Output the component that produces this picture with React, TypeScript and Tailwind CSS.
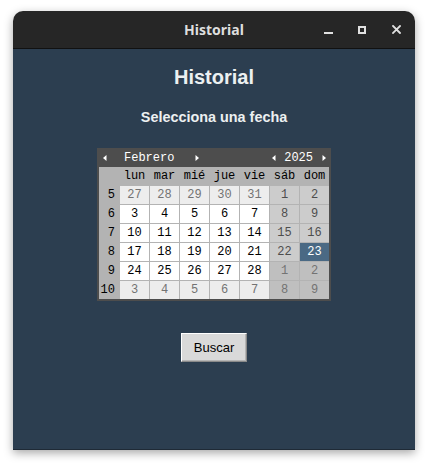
import React from "react";

type Kind = "normal" | "other" | "weekend" | "otherWeekend" | "selected";

const WEEKDAYS = ["lun", "mar", "mié", "jue", "vie", "sáb", "dom"];

const ROWS: { week: number; days: [number, Kind][] }[] = [
  { week: 5, days: [[27, "other"], [28, "other"], [29, "other"], [30, "other"], [31, "other"], [1, "weekend"], [2, "weekend"]] },
  { week: 6, days: [[3, "normal"], [4, "normal"], [5, "normal"], [6, "normal"], [7, "normal"], [8, "weekend"], [9, "weekend"]] },
  { week: 7, days: [[10, "normal"], [11, "normal"], [12, "normal"], [13, "normal"], [14, "normal"], [15, "weekend"], [16, "weekend"]] },
  { week: 8, days: [[17, "normal"], [18, "normal"], [19, "normal"], [20, "normal"], [21, "normal"], [22, "weekend"], [23, "selected"]] },
  { week: 9, days: [[24, "normal"], [25, "normal"], [26, "normal"], [27, "normal"], [28, "normal"], [1, "otherWeekend"], [2, "otherWeekend"]] },
  { week: 10, days: [[3, "other"], [4, "other"], [5, "other"], [6, "other"], [7, "other"], [8, "otherWeekend"], [9, "otherWeekend"]] },
];

const KIND_CLASS: Record<Kind, string> = {
  normal: "bg-white text-black",
  other: "bg-[#ededed] text-[#737373]",
  weekend: "bg-[#cccccc] text-[#4d4d4d]",
  otherWeekend: "bg-[#bfbfbf] text-[#737373]",
  selected: "bg-[#4a6984] text-white",
};

function ArrowLeft() {
  return (
    <svg width="4" height="6" viewBox="0 0 4 6" className="block">
      <polygon points="3.5,0 0,3 3.5,6" fill="#ffffff" />
    </svg>
  );
}

function ArrowRight() {
  return (
    <svg width="4" height="6" viewBox="0 0 4 6" className="block">
      <polygon points="0.5,0 4,3 0.5,6" fill="#ffffff" />
    </svg>
  );
}

function Calendar() {
  return (
    <div className="w-[234px] bg-[#4d4d4d] px-[2px] pb-[2px] font-['Liberation_Mono',monospace] text-[12px] leading-none">
      {/* month / year header */}
      <div className="h-[19px] flex items-center text-white">
        <div className="ml-[4px]"><ArrowLeft /></div>
        <span className="ml-[17px] mr-[21px]">Febrero</span>
        <ArrowRight />
        <div className="flex-1" />
        <ArrowLeft />
        <span className="ml-[8px] mr-[9px]">2025</span>
        <div className="mr-[3px]"><ArrowRight /></div>
      </div>

      <div className="grid grid-cols-[20px_repeat(7,29px)] auto-rows-[18px] gap-px bg-[#b3b3b3]">
        <div className="bg-[#b3b3b3]" />
        {WEEKDAYS.map((d) => (
          <div key={d} className="bg-[#b3b3b3] text-black flex items-center justify-center">
            {d}
          </div>
        ))}
        {ROWS.map((row) => (
          <React.Fragment key={row.week}>
            <div className="bg-[#b3b3b3] text-black flex items-center justify-end pr-[4px]">
              {row.week}
            </div>
            {row.days.map(([n, kind], i) => (
              <div key={i} className={`${KIND_CLASS[kind]} flex items-center justify-center`}>
                {n}
              </div>
            ))}
          </React.Fragment>
        ))}
      </div>
    </div>
  );
}

export default function App() {
  return (
    <div className="w-[428px] h-[466px] bg-white pt-[11px] pl-[13px]">
      <div className="w-[402px] h-[439px] rounded-t-[10px] overflow-hidden flex flex-col shadow-[0_3px_10px_rgba(0,0,0,0.35)] border-b border-[#1f2a36]">
        {/* title bar */}
        <div className="h-[37px] shrink-0 bg-[#262626] grid grid-cols-[1fr_auto_1fr] items-center">
          <div />
          <span className="font-['Noto_Sans',sans-serif] font-bold text-[14px] text-[#dedede]">Historial</span>
          <div className="flex justify-end pr-[2px] h-full items-center">
            <div className="w-[34px] h-full flex items-center justify-center">
              <div className="w-[9px] h-[2px] bg-[#e0e0e0] mt-[6px]" />
            </div>
            <div className="w-[34px] h-full flex items-center justify-center">
              <div className="w-[8px] h-[8px] border-2 border-[#e0e0e0]" />
            </div>
            <div className="w-[34px] h-full flex items-center justify-center">
              <svg width="9" height="9" viewBox="0 0 9 9">
                <path d="M1 1 L8 8 M8 1 L1 8" stroke="#e0e0e0" strokeWidth="1.8" strokeLinecap="square" />
              </svg>
            </div>
          </div>
        </div>
        <div className="h-px bg-[#111111] shrink-0" />

        {/* body */}
        <div className="flex-1 bg-[#2c3e50] flex flex-col items-center pt-[16px] font-['Liberation_Sans',Arial,sans-serif]">
          <h1 className="text-[20px] leading-[24px] font-bold text-[#ecf0f1]">Historial</h1>
          <p className="mt-[19px] text-[14.4px] leading-[18px] font-bold text-[#ecf0f1]">Selecciona una fecha</p>
          <div className="mt-[22px]">
            <Calendar />
          </div>
          <button className="mt-[32px] w-[66px] h-[29px] bg-[#d9d9d9] text-black text-[13px] border border-t-white border-l-white border-b-[#8a8a8a] border-r-[#8a8a8a] shadow-[inset_-1px_-1px_0_#b5b5b5]">
            Buscar
          </button>
        </div>
      </div>
    </div>
  );
}
